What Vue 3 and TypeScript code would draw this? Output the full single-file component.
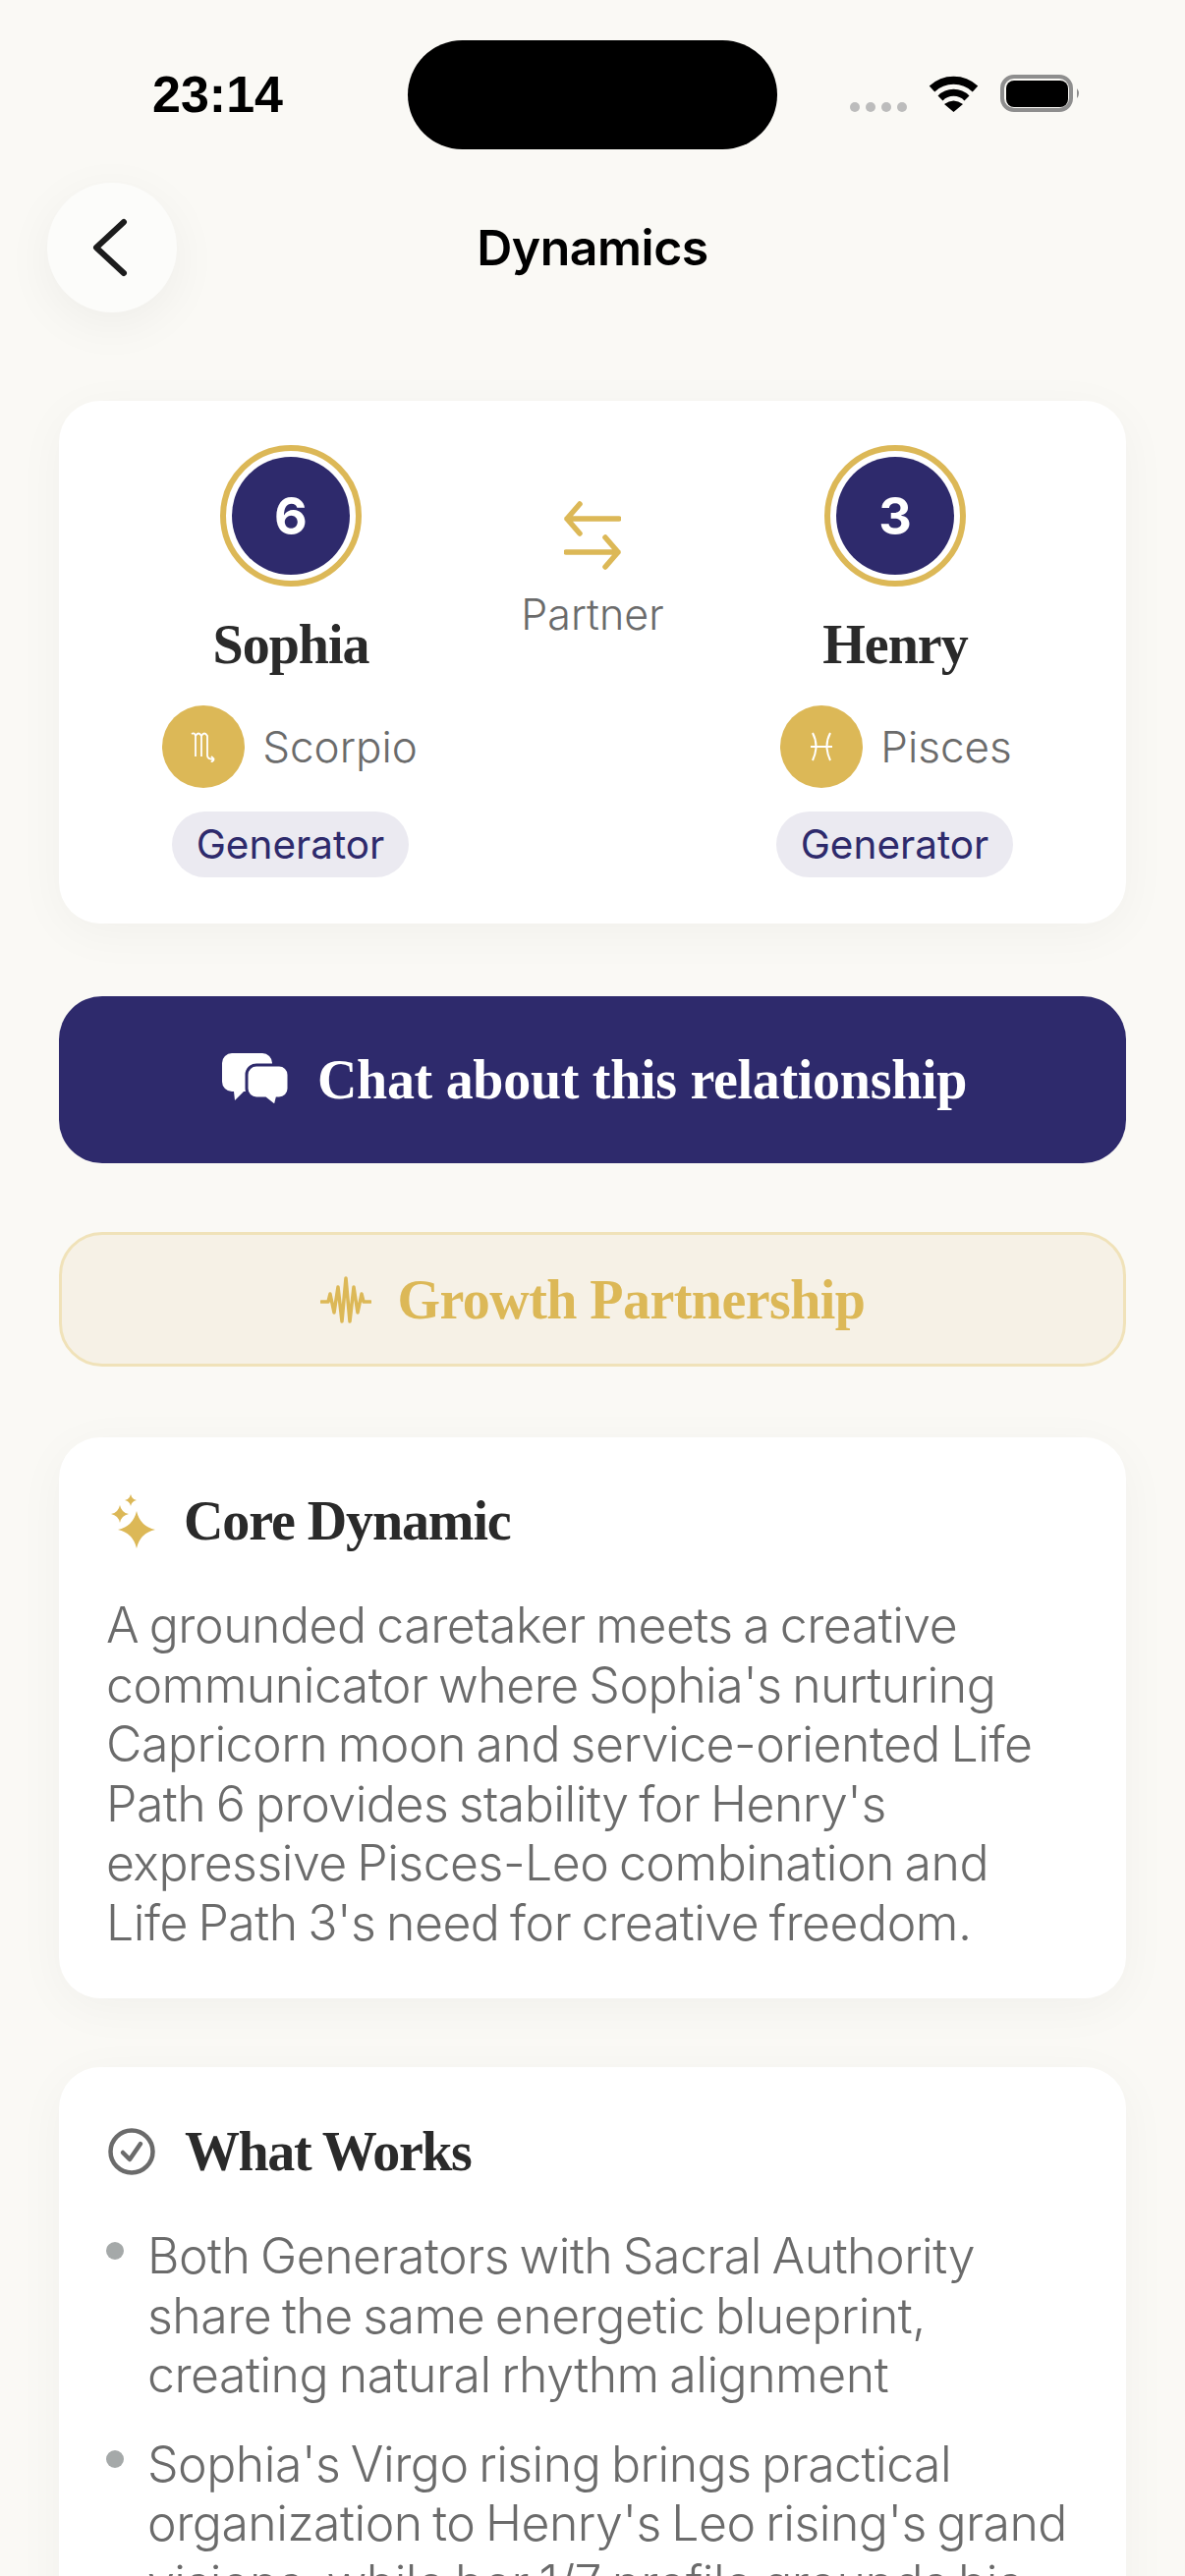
<template>
  <div class="screen">
    <div class="status-bar">
      <span class="time">23:14</span>
      <div class="island"></div>
      <div class="status-icons">
        <div class="signal"><i></i><i></i><i></i><i></i></div>
        <svg class="wifi" viewBox="0 0 51 38" width="51" height="38">
          <path d="M3.5 14.5A32 32 0 0 1 47.500 14.500" fill="none" stroke="#000" stroke-width="8" />
          <path d="M12 24A19 19 0 0 1 39 24" fill="none" stroke="#000" stroke-width="7" />
          <path d="M25.500 38L16 30Q25.500 23 35 30Z" fill="#000" />
        </svg>
        <svg class="battery" viewBox="0 0 82 38" width="82" height="38">
          <rect x="2" y="2" width="70" height="34" rx="12" fill="none" stroke="#8e8e8e" stroke-width="4" />
          <rect x="6" y="6" width="63" height="27" rx="8" fill="#000" />
          <path d="M78 14Q82 19 78 24Z" fill="#8e8e8e" />
        </svg>
      </div>
    </div>

    <header class="top-bar">
      <button class="back-btn">
        <svg viewBox="0 0 36 60" width="36" height="60">
          <path d="M32 4L4 30L32 56" fill="none" stroke="#1c1c1c" stroke-width="6" stroke-linecap="round" stroke-linejoin="round" />
        </svg>
      </button>
      <h1>Dynamics</h1>
      <span></span>
    </header>

    <main class="content">
      <section class="card people">
        <div class="person" v-for="p in people" :key="p.name">
          <div class="ring"><div class="num">{{ p.num }}</div></div>
          <div class="name">{{ p.name }}</div>
          <div class="sign">
            <span class="sign-dot">
              <svg v-if="p.sign === 'Scorpio'" viewBox="0 0 28 32" width="28" height="32">
                <path d="M2 3Q5 1 6 5V26M6 5Q9 0 12 5V26M12 5Q15 0 18 5V25Q18 29 25 29M25 29L22 26M25 29L22 32" fill="none" stroke="#fff" stroke-width="1.800" />
              </svg>
              <svg v-else viewBox="0 0 24 32" width="24" height="32">
                <path d="M3 2Q10 15 3 30M21 2Q14 15 21 30M1 16H23" fill="none" stroke="#fff" stroke-width="2" />
              </svg>
            </span>
            <span>{{ p.sign }}</span>
          </div>
          <span class="pill">{{ p.type }}</span>
        </div>
        <div class="link">
          <svg viewBox="0 0 58 70" width="58" height="70">
            <path d="M56 18H3M16 3L3 18L16 33M2 52H55M42 37L55 52L42 67" fill="none" stroke="#dcb857" stroke-width="5.500" stroke-linecap="round" stroke-linejoin="round" />
          </svg>
          <span>Partner</span>
        </div>
      </section>

      <button class="chat-btn">
        <svg viewBox="0 0 68 54" width="68" height="54">
          <path d="M10 0H41A10 10 0 0 1 51 10V29A10 10 0 0 1 41 39H22L13 48L12 39H10A10 10 0 0 1 0 29V10A10 10 0 0 1 10 0Z" fill="#fff" />
          <path d="M35 12H58A10 10 0 0 1 68 22V36A10 10 0 0 1 58 46H56L54 54L44 46H35A10 10 0 0 1 25 36V22A10 10 0 0 1 35 12Z" fill="#fff" stroke="#2e2a6c" stroke-width="3" />
        </svg>
        <span>Chat about this relationship</span>
      </button>

      <div class="banner">
        <svg viewBox="0 0 52 48" width="52" height="48">
          <path d="M1 26H8L10 18L14 37L18 11L22 46L26 2L30 46L34 11L38 37L42 18L44 26H51" fill="none" stroke="#dcb857" stroke-width="3.500" stroke-linecap="round" stroke-linejoin="round" />
        </svg>
        <span>Growth Partnership</span>
      </div>

      <section class="card block">
        <div class="block-title">
          <svg viewBox="0 0 46 56" width="46" height="56">
            <path d="M26 18Q29.500 33.500 45 37Q29.500 40.500 26 56Q22.500 40.500 7 37Q22.500 33.500 26 18Z" fill="#dcb857" />
            <path d="M9 12Q10.500 19.500 18 21Q10.500 22.500 9 30Q7.500 22.500 0 21Q7.500 19.500 9 12Z" fill="#dcb857" />
            <path d="M20 1Q21 6 26 7Q21 8 20 13Q19 8 14 7Q19 6 20 1Z" fill="#dcb857" />
          </svg>
          <h2>Core Dynamic</h2>
        </div>
        <p>A grounded caretaker meets a creative communicator where Sophia's nurturing Capricorn moon and service-oriented Life Path 6 provides stability for Henry's expressive Pisces-Leo combination and Life Path 3's need for creative freedom.</p>
      </section>

      <section class="card block works">
        <div class="block-title">
          <svg viewBox="0 0 48 48" width="48" height="48">
            <circle cx="24" cy="24" r="21.500" fill="none" stroke="#6b6b6b" stroke-width="4.500" />
            <path d="M15 25L22 32L33 16" fill="none" stroke="#6b6b6b" stroke-width="4.500" stroke-linecap="round" stroke-linejoin="round" />
          </svg>
          <h2>What Works</h2>
        </div>
        <ul>
          <li v-for="item in works" :key="item">{{ item }}</li>
        </ul>
      </section>
    </main>
  </div>
</template>

<script setup lang="ts">
const people = [
  { name: 'Sophia', num: 6, sign: 'Scorpio', type: 'Generator' },
  { name: 'Henry', num: 3, sign: 'Pisces', type: 'Generator' }
]

const works = [
  'Both Generators with Sacral Authority share the same energetic blueprint, creating natural rhythm alignment',
  "Sophia's Virgo rising brings practical organization to Henry's Leo rising's grand visions, while her 1/7 profile grounds his"
]
</script>

<style>
html,
body {
  margin: 0;
  background: #faf9f5;
}
</style>

<style scoped>
.screen {
  width: 1206px;
  height: 2622px;
  overflow: hidden;
  background: #faf9f5;
  font-family: Inter, "Liberation Sans", sans-serif;
}

.status-bar {
  position: relative;
  height: 186px;
  display: flex;
  justify-content: space-between;
  align-items: center;
  padding: 8px 106px 0 155px;
  box-sizing: border-box;
}

.time {
  font-family: "Liberation Sans", sans-serif;
  font-size: 52px;
  font-weight: 700;
  color: #000;
  margin-top: -3px;
}

.island {
  position: absolute;
  left: 415px;
  top: 41px;
  width: 376px;
  height: 111px;
  border-radius: 56px;
  background: #000;
}

.status-icons {
  display: flex;
  align-items: flex-start;
  margin-top: -4px;
}

.signal {
  display: flex;
  gap: 6px;
  margin-top: 28px;
  margin-right: 22px;
}

.signal i {
  width: 10px;
  height: 10px;
  border-radius: 50%;
  background: #bcbcbc;
}

.wifi {
  margin-right: 22px;
}

.top-bar {
  display: grid;
  grid-template-columns: 1fr auto 1fr;
  align-items: center;
  padding: 0 48px;
  height: 132px;
}

.top-bar h1 {
  margin: 0;
  font-size: 50px;
  font-weight: 600;
  letter-spacing: -0.5px;
  color: #000;
}

.back-btn {
  width: 132px;
  height: 132px;
  border: none;
  border-radius: 50%;
  background: #fcfcfa;
  box-shadow: 0 12px 50px rgba(0, 0, 0, 0.05);
  display: flex;
  align-items: center;
  justify-content: center;
  padding: 0 4px 0 0;
}

.content {
  display: flex;
  flex-direction: column;
  padding: 90px 60px 0;
}

.card {
  background: #fff;
  border-radius: 42px;
  box-shadow: 0 10px 50px rgba(0, 0, 0, 0.04);
}

.people {
  height: 532px;
  box-sizing: border-box;
  display: flex;
  justify-content: space-between;
  padding: 45px 85px 0 86px;
  position: relative;
}

.person {
  width: 300px;
  display: flex;
  flex-direction: column;
  align-items: center;
}

.ring {
  width: 144px;
  height: 144px;
  box-sizing: border-box;
  border: 6px solid #dcb857;
  border-radius: 50%;
  padding: 6px;
  background: #fff;
}

.num {
  width: 120px;
  height: 120px;
  border-radius: 50%;
  background: #2e2a6c;
  color: #fff;
  font-size: 52px;
  font-weight: 700;
  display: flex;
  align-items: center;
  justify-content: center;
}

.name {
  margin-top: 24px;
  font-family: "Liberation Serif", serif;
  font-size: 56px;
  line-height: 70px;
  font-weight: 700;
  letter-spacing: -1px;
  color: #2a2a2a;
}

.sign {
  margin-top: 27px;
  display: flex;
  align-items: center;
  gap: 18px;
  font-size: 44px;
  font-weight: 300;
  color: #6b6b6b;
}

.person:first-child .sign {
  margin-right: 2px;
}

.person:nth-child(2) .sign {
  margin-left: 2px;
}

.sign-dot {
  width: 84px;
  height: 84px;
  border-radius: 50%;
  background: #dcb857;
  display: flex;
  align-items: center;
  justify-content: center;
}

.pill {
  margin-top: 24px;
  height: 67px;
  line-height: 67px;
  padding: 0 25px;
  border-radius: 34px;
  background: #ebeaf1;
  color: #2e2a6c;
  font-size: 40.500px;
  margin-right: 1px;
}

.link {
  position: absolute;
  left: 0;
  right: 0;
  top: 102px;
  display: flex;
  flex-direction: column;
  align-items: center;
  gap: 19px;
  font-size: 43px;
  font-weight: 300;
  color: #6b6b6b;
}

.chat-btn {
  margin-top: 74px;
  height: 170px;
  border: none;
  border-radius: 44px;
  padding: 0 0 0 4px;
  background: #2e2a6c;
  color: #fff;
  font-family: "Liberation Serif", serif;
  font-size: 56px;
  font-weight: 700;
  letter-spacing: -0.3px;
  display: flex;
  align-items: center;
  justify-content: center;
  gap: 29px;
}

.banner {
  margin-top: 70px;
  height: 137px;
  box-sizing: border-box;
  border: 3px solid #f0e2b9;
  border-radius: 44px;
  background: #f6f1e6;
  color: #dcb857;
  font-family: "Liberation Serif", serif;
  font-size: 56px;
  font-weight: 700;
  letter-spacing: -0.55px;
  display: flex;
  align-items: center;
  justify-content: center;
  gap: 27px;
}

.block {
  margin-top: 72px;
  padding: 50px 60px 0 48px;
  height: 571px;
  box-sizing: border-box;
}

.block-title {
  display: flex;
  align-items: center;
  gap: 28px;
  height: 70px;
  padding-left: 5px;
}

.block-title h2 {
  margin: 0;
  font-family: "Liberation Serif", serif;
  font-size: 56px;
  font-weight: 700;
  letter-spacing: -1.1px;
  color: #2a2a2a;
}

.block p {
  margin: 41px 0 0;
  font-size: 50px;
  line-height: 60.500px;
  font-weight: 300;
  letter-spacing: -0.5px;
  word-spacing: -3px;
  color: #6b6b6b;
}

.works {
  margin-top: 70px;
  height: auto;
  padding: 51px 48px 60px;
}

.works .block-title {
  padding-left: 2px;
  gap: 30px;
}

.works .block-title h2 {
  letter-spacing: -1.4px;
}

.works ul {
  list-style: none;
  margin: 41px 0 0;
  padding: 0;
}

.works li {
  position: relative;
  padding-left: 42px;
  margin-bottom: 30px;
  font-size: 50px;
  line-height: 60.500px;
  font-weight: 300;
  letter-spacing: -0.5px;
  word-spacing: -3px;
  color: #6b6b6b;
}

.works li::before {
  content: "";
  position: absolute;
  left: 0;
  top: 16px;
  width: 18px;
  height: 18px;
  border-radius: 50%;
  background: #a5a9a9;
}
</style>
